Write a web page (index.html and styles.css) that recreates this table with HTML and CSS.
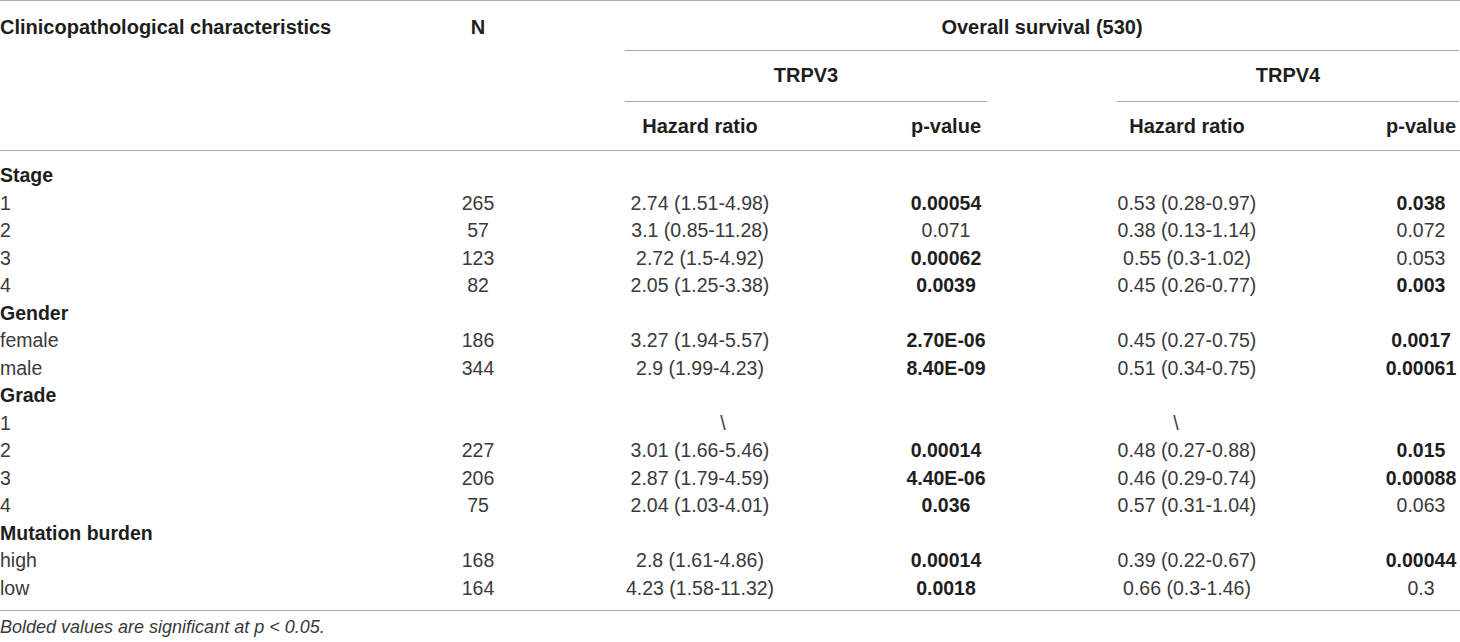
FILE: index.html
```
<!DOCTYPE html>
<html lang="en">
<head>
  <meta charset="UTF-8">
  <title>Overall survival by TRPV3 / TRPV4</title>
  <link rel="stylesheet" href="styles.css">
</head>
<body>
  <table class="survival">
    <colgroup>
      <col class="c-char">
      <col class="c-n">
      <col class="c-hr3">
      <col class="c-p3">
      <col class="c-hr4">
      <col class="c-p4">
    </colgroup>
    <thead>
      <tr class="h1">
        <th rowspan="3" class="left">Clinicopathological characteristics</th>
        <th rowspan="3" class="top">N</th>
        <th colspan="4"><div class="group">Overall survival (530)</div></th>
      </tr>
      <tr class="h2">
        <th colspan="2"><div class="group g3">TRPV3</div></th>
        <th colspan="2"><div class="group">TRPV4</div></th>
      </tr>
      <tr class="h3">
        <th>Hazard ratio</th>
        <th>p-value</th>
        <th>Hazard ratio</th>
        <th>p-value</th>
      </tr>
    </thead>
    <tbody>
      <tr class="cat first"><td>Stage</td><td></td><td></td><td></td><td></td><td></td></tr>
      <tr><td>1</td><td>265</td><td>2.74 (1.51-4.98)</td><td class="sig">0.00054</td><td>0.53 (0.28-0.97)</td><td class="sig">0.038</td></tr>
      <tr><td>2</td><td>57</td><td>3.1 (0.85-11.28)</td><td>0.071</td><td>0.38 (0.13-1.14)</td><td>0.072</td></tr>
      <tr><td>3</td><td>123</td><td>2.72 (1.5-4.92)</td><td class="sig">0.00062</td><td>0.55 (0.3-1.02)</td><td>0.053</td></tr>
      <tr><td>4</td><td>82</td><td>2.05 (1.25-3.38)</td><td class="sig">0.0039</td><td>0.45 (0.26-0.77)</td><td class="sig">0.003</td></tr>
      <tr class="cat"><td>Gender</td><td></td><td></td><td></td><td></td><td></td></tr>
      <tr><td>female</td><td>186</td><td>3.27 (1.94-5.57)</td><td class="sig">2.70E-06</td><td>0.45 (0.27-0.75)</td><td class="sig">0.0017</td></tr>
      <tr><td>male</td><td>344</td><td>2.9 (1.99-4.23)</td><td class="sig">8.40E-09</td><td>0.51 (0.34-0.75)</td><td class="sig">0.00061</td></tr>
      <tr class="cat"><td>Grade</td><td></td><td></td><td></td><td></td><td></td></tr>
      <tr><td>1</td><td></td><td class="na-r">\</td><td></td><td class="na-l">\</td><td></td></tr>
      <tr><td>2</td><td>227</td><td>3.01 (1.66-5.46)</td><td class="sig">0.00014</td><td>0.48 (0.27-0.88)</td><td class="sig">0.015</td></tr>
      <tr><td>3</td><td>206</td><td>2.87 (1.79-4.59)</td><td class="sig">4.40E-06</td><td>0.46 (0.29-0.74)</td><td class="sig">0.00088</td></tr>
      <tr><td>4</td><td>75</td><td>2.04 (1.03-4.01)</td><td class="sig">0.036</td><td>0.57 (0.31-1.04)</td><td>0.063</td></tr>
      <tr class="cat"><td>Mutation burden</td><td></td><td></td><td></td><td></td><td></td></tr>
      <tr><td>high</td><td>168</td><td>2.8 (1.61-4.86)</td><td class="sig">0.00014</td><td>0.39 (0.22-0.67)</td><td class="sig">0.00044</td></tr>
      <tr class="last"><td>low</td><td>164</td><td>4.23 (1.58-11.32)</td><td class="sig">0.0018</td><td>0.66 (0.3-1.46)</td><td>0.3</td></tr>
    </tbody>
  </table>
  <p class="note">Bolded values are significant at p &lt; 0.05.</p>
</body>
</html>
```

FILE: styles.css
```
html, body {
  margin: 0;
  padding: 0;
  overflow: hidden;
  background: #fff;
  font-family: 'Liberation Sans', Arial, sans-serif;
  color: #3a3a3a;
}
.survival {
  width: 1496px;
  table-layout: fixed;
  border-collapse: separate;
  border-spacing: 0;
  border-top: 1px solid #a9a9a9;
  font-size: 19.5px;
}
.c-char { width: 420px; }
.c-n { width: 116px; }
.c-hr3 { width: 328px; }
.c-p3 { width: 164px; }
.c-hr4 { width: 318px; }
.c-p4 { width: 150px; }

th {
  font-size: 20px;
  font-weight: bold;
  color: #1e1e1e;
  padding: 0;
  line-height: 22px;
  text-align: center;
}
th.left {
  text-align: left;
  vertical-align: top;
  padding-top: 15px;
  border-bottom: 1px solid #a9a9a9;
}
th.top {
  vertical-align: top;
  padding-top: 15px;
  border-bottom: 1px solid #a9a9a9;
}
.group {
  margin: 0 37px 0 89px;
  border-bottom: 1px solid #a9a9a9;
}
.group.g3 {
  margin-right: 41px;
}
.h1 .group {
  padding: 15px 0 12px;
}
.h2 .group {
  padding: 13px 0 15px;
}
.h3 th {
  padding: 13px 0 13px;
  border-bottom: 1px solid #a9a9a9;
}

td {
  padding: 0;
  line-height: 27.5px;
  text-align: center;
  white-space: nowrap;
}
td:first-child {
  text-align: left;
}
.cat td {
  font-weight: bold;
  color: #1e1e1e;
}
.first td {
  padding-top: 11px;
}
.last td {
  padding-bottom: 8px;
  border-bottom: 1px solid #a9a9a9;
}
.sig {
  font-weight: bold;
  color: #1e1e1e;
}
.na-r {
  padding-left: 46px;
}
.na-l {
  padding-right: 22px;
}
.note {
  margin: 0;
  padding-top: 5px;
  line-height: 22px;
  font-size: 18px;
  font-style: italic;
  color: #3a3a3a;
}
```
